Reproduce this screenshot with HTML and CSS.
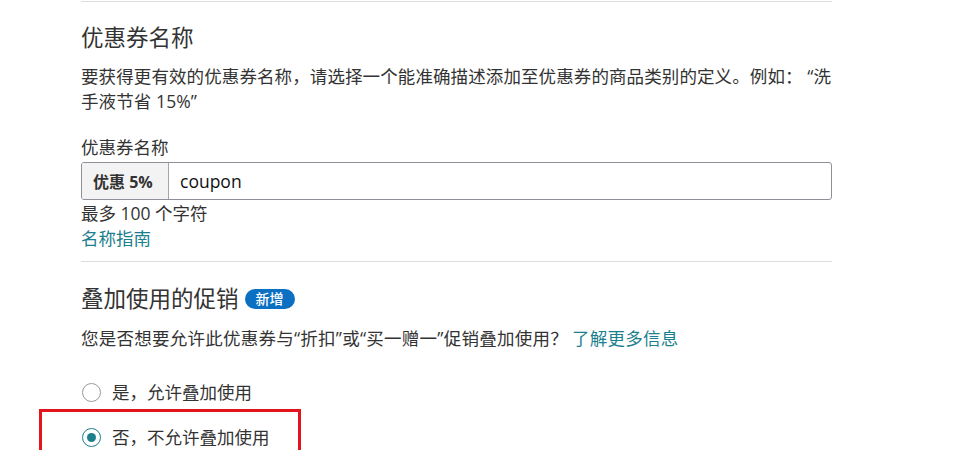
FILE: index.html
```html
<!DOCTYPE html>
<html lang="zh-CN">
<head>
<meta charset="utf-8">
<title>优惠券名称</title>
<link rel="stylesheet" href="styles.css">
</head>
<body>
<div class="page">
  <div class="rule rule-top"></div>
  <h2 class="title">优惠券名称</h2>
  <p class="desc">要获得更有效的优惠券名称，请选择一个能准确描述添加至优惠券的商品类别的定义。例如： “洗手液节省 15%”</p>
  <div class="label">优惠券名称</div>
  <div class="field">
    <span class="prefix">优惠 5%</span>
    <span class="value">coupon</span>
  </div>
  <div class="hint">最多 100 个字符</div>
  <a class="link" href="#">名称指南</a>
  <div class="rule rule-mid"></div>
  <h2 class="title title-two">叠加使用的促销 <span class="badge">新增</span></h2>
  <p class="desc desc-two">您是否想要允许此优惠券与“折扣”或“买一赠一”促销叠加使用？<a class="link" href="#">了解更多信息</a></p>
  <div class="radios">
    <label class="radio"><span class="circle"></span><span>是，允许叠加使用</span></label>
    <label class="radio radio-two"><span class="circle checked"></span><span>否，不允许叠加使用</span></label>
    <div class="highlight"></div>
  </div>
</div>
</body>
</html>
```

FILE: styles.css
```css
html, body {
  margin: 0;
  padding: 0;
  background: #ffffff;
}
body {
  font-family: "Open Sans", "Noto Sans CJK SC", sans-serif;
  color: #333333;
  font-size: 17.5px;
}
.page {
  width: 751px;
  margin-left: 81px;
  padding-top: 1px;
}
.rule {
  height: 1px;
  background: #dddddd;
}
.title {
  margin: 21px 0 0 0;
  font-size: 22.5px;
  font-weight: 400;
  line-height: 30px;
  color: #333333;
  display: flex;
  align-items: center;
}
.desc {
  margin: 11px 0 0 0;
  line-height: 25px;
  letter-spacing: 0.1px;
}
.label {
  margin-top: 21px;
  line-height: 25px;
}
.field {
  margin-top: 2px;
  height: 38px;
  box-sizing: border-box;
  border: 1px solid #8d9096;
  border-radius: 3px;
  display: flex;
  align-items: stretch;
  overflow: hidden;
}
.prefix {
  width: 87px;
  box-sizing: border-box;
  background: #f3f3f3;
  border-right: 1px solid #a6a6a6;
  padding-left: 11px;
  font-weight: 700;
  font-size: 16px;
  display: flex;
  align-items: center;
  color: #333;
}
.value {
  padding-left: 11px;
  display: flex;
  align-items: center;
  color: #111111;
  font-size: 17.5px;
}
.hint {
  margin-top: 1px;
  line-height: 25px;
}
.link {
  display: inline-block;
  line-height: 25px;
  color: #1b7f8e;
  text-decoration: none;
}
.rule-mid {
  margin-top: 10px;
}
.title-two {
  margin-top: 22px;
}
.badge {
  display: inline-flex;
  align-items: center;
  justify-content: center;
  margin-left: 6px;
  width: 50px;
  height: 20px;
  border-radius: 10px;
  background: #0b6fc2;
  color: #ffffff;
  font-size: 14px;
  font-weight: 500;
}
.desc-two {
  margin-top: 12px;
  letter-spacing: 0.25px;
}
.desc-two .link {
  margin-left: 4px;
}
.radios {
  position: relative;
  margin-top: 29px;
  display: flex;
  flex-direction: column;
  gap: 20px;
}
.radio {
  display: flex;
  align-items: center;
  gap: 11px;
  line-height: 25px;
  padding-left: 1px;
}
.circle {
  width: 19px;
  height: 19px;
  box-sizing: border-box;
  border: 1px solid #9a9a9a;
  border-radius: 50%;
  background: #fff;
  position: relative;
}
.circle.checked {
  border-color: #1b7f8e;
}
.circle.checked::after {
  content: "";
  position: absolute;
  left: 4px;
  top: 4px;
  width: 9px;
  height: 9px;
  border-radius: 50%;
  background: #1b7f8e;
}
.highlight {
  position: absolute;
  left: -42px;
  top: 28.5px;
  width: 262px;
  height: 45px;
  box-sizing: border-box;
  border: 3px solid #e3141b;
}
```
